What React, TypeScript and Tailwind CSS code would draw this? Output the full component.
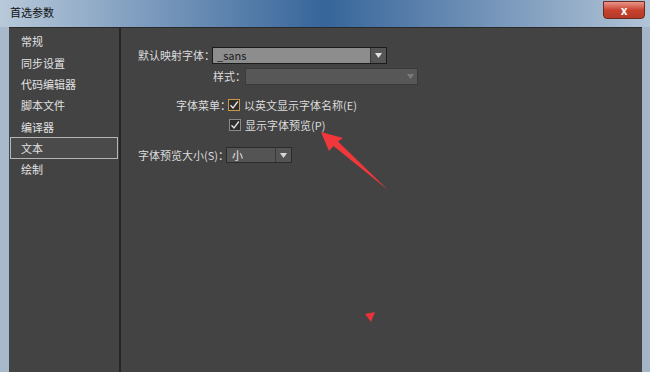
import { ReactNode } from 'react'

const font = { fontFamily: '"Noto Sans CJK SC", "Noto Sans", sans-serif' }

const navItems = ['常规', '同步设置', '代码编辑器', '脚本文件', '编译器', '文本', '绘制']

function Caret({ className }: { className: string }) {
  return (
    <svg width="7" height="5" viewBox="0 0 7 5" className={className}>
      <path d="M0 0h7L3.5 5z" fill="currentColor" />
    </svg>
  )
}

function Check({ focused, children }: { focused?: boolean; children: ReactNode }) {
  return (
    <div className="flex items-center gap-[4px]">
      <div
        className={`flex h-[12px] w-[12px] items-center justify-center border bg-[#2e2e2e] ${
          focused ? 'border-[#c99a45]' : 'border-[#8a8a8a]'
        }`}
      >
        <svg width="10" height="10" viewBox="0 0 10 10">
          <path d="M1.5 5.2 4 8 8.8 1.5" fill="none" stroke="#e6e6e6" strokeWidth="1.3" />
        </svg>
      </div>
      <span className="whitespace-nowrap text-[11px] leading-none text-[#dcdcdc]">{children}</span>
    </div>
  )
}

export default function App() {
  return (
    <div
      style={font}
      className="relative flex h-[372px] w-[650px] flex-col overflow-hidden bg-gradient-to-b from-[#8ea6bf] to-[#6d87a3]"
    >
      {/* title bar */}
      <div className="flex h-[27px] items-start justify-between bg-gradient-to-r from-[#b8c9da] via-[#36659a] to-[#b2c4d6] pl-[10px] pr-[5px]">
        <span className="pt-[7px] text-[11px] leading-none text-[#111]">首选参数</span>
        <div className="mt-[1px] flex h-[18px] w-[42px] items-center justify-center rounded-b-[4px] border border-[#6b2a22] bg-gradient-to-b from-[#e8958a] via-[#c8412f] to-[#b43a26]">
          <span className="text-[12px] font-bold leading-none text-white">x</span>
        </div>
      </div>

      {/* body */}
      <div className="flex flex-1 border-l-[9px] border-r-[8px] border-l-[#a7b9cb] border-r-[#a3b5c7]">
        <div className="flex flex-1 border-t border-[#2a2a2a]">
          {/* sidebar */}
          <div className="flex w-[110px] flex-col bg-[#434343] pt-[3px]">
            {navItems.map((item) => (
              <div
                key={item}
                className={`mx-[1px] flex h-[21.3px] items-center pl-[10px] text-[11px] text-[#e2e2e2] ${
                  item === '文本' ? 'border border-[#b5b5b5] bg-[#4a4a4a]' : 'border border-transparent'
                }`}
              >
                {item}
              </div>
            ))}
          </div>
          <div className="w-[2px] bg-[#262626]" />

          {/* main panel */}
          <div className="flex flex-1 flex-col bg-[#434343] pl-[17px] pt-[19px] text-[11px] leading-none text-[#dcdcdc]">
            <div className="flex items-center">
              <span className="w-[74px] whitespace-nowrap">默认映射字体：</span>
              <div className="flex h-[17px] w-[175px] border border-[#1c1c1c] bg-[#8d8d8d]">
                <span className="flex-1 pl-[4px] pt-[2px] text-[#1e1e1e]">_sans</span>
                <div className="flex w-[16px] items-center justify-center border-l border-[#3a3a3a] bg-[#555]">
                  <Caret className="text-[#e0e0e0]" />
                </div>
              </div>
            </div>

            <div className="ml-[75px] mt-[4px] flex items-center">
              <span className="w-[32px] whitespace-nowrap">样式：</span>
              <div className="flex h-[17px] w-[173px] border border-[#3a3a3a] bg-[#575757]">
                <span className="flex-1" />
                <div className="flex w-[14px] items-center justify-center">
                  <Caret className="text-[#7a7a7a]" />
                </div>
              </div>
            </div>

            <div className="ml-[38px] mt-[14px] flex items-center">
              <span className="w-[52px] whitespace-nowrap">字体菜单：</span>
              <Check focused>以英文显示字体名称(E)</Check>
            </div>
            <div className="ml-[91px] mt-[8px]">
              <Check>显示字体预览(P)</Check>
            </div>

            <div className="mt-[16px] flex items-center">
              <span className="w-[88px] whitespace-nowrap">字体预览大小(S)：</span>
              <div className="flex h-[16px] w-[66px] border border-[#2b2b2b] bg-[#545454]">
                <span className="flex-1 pl-[5px] pt-[2px] text-[#e6e6e6]">小</span>
                <div className="flex w-[16px] items-center justify-center border-l border-[#3a3a3a]">
                  <Caret className="text-[#d8d8d8]" />
                </div>
              </div>
            </div>
          </div>
        </div>
      </div>

      {/* annotation arrow */}
      <svg className="pointer-events-none absolute left-0 top-0" width="650" height="372">
        <path d="M321 132 L343 138 L338 141.5 L388 190 L333.5 146 L329 151 Z" fill="#f0373c" />
        <path d="M365 314 L375 312 L371 322 Z" fill="#e8333a" />
      </svg>
    </div>
  )
}
